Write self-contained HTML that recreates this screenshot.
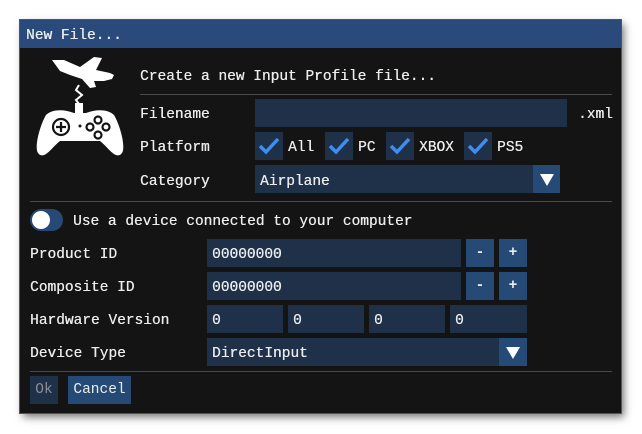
<!DOCTYPE html>
<html><head><style>
body{margin:0;width:642px;height:434px;background:#fff;position:relative;overflow:hidden;font-family:"Liberation Mono",monospace;font-size:14.5px;color:#ececec}
.dlg{position:absolute;left:20px;top:20px;width:601px;height:393px;background:#141414;box-shadow:3px 4px 8px rgba(0,0,0,.55);outline:1px solid #555}
.title{position:absolute;left:0;top:0;width:601px;height:28px;background:#294a7a;}
.t{position:absolute;white-space:pre;line-height:16px;margin-top:1px;text-shadow:0.3px 0 0 #ececec}
.in{position:absolute;background:#1f3049;height:28px}
.bt{position:absolute;background:#264a76;height:28px;text-align:center;line-height:29px;font-weight:bold}
.sep{position:absolute;height:1px;background:#4a4a4f}
.cb{position:absolute;width:28px;height:28px;background:#1f3049}
</style></head><body>
<div class="dlg"></div>
<div class="title" style="left:20px;top:20px"></div>
<div class="t" style="left:26px;top:27px">New File...</div>
<svg style="position:absolute;left:30px;top:55px" width="100" height="110" viewBox="0 0 100 110">
<g fill="#fff">
<path d="M22 5 L34 5 L50 12 L64 2 L72 3 L66 15 L80 18 L84 20 L82 24 L74 26 L64 26 L66 32 L60 33 L52 24 L40 20 L30 16 Z"/>
<path d="M8 98 C4 92 10 70 16 60 C22 54 34 54 44 58 L56 58 C66 54 78 54 84 60 C90 70 96 92 92 98 C86 106 78 92 70 86 L30 86 C22 92 14 106 8 98 Z"/>
<rect x="45" y="48" width="8" height="10"/>
</g>
<path d="M49 30 L46 35 L52 40 L46 45 L49 49" stroke="#fff" stroke-width="2" fill="none"/>
<g fill="none" stroke="#141414" stroke-width="2.2">
<circle cx="31" cy="72" r="8"/><path d="M31 67v10M26 72h10"/>
<circle cx="68" cy="65" r="3.5"/><circle cx="60" cy="72" r="3.5"/><circle cx="76" cy="72" r="3.5"/><circle cx="68" cy="80" r="3.5"/>
</g>
<circle cx="50" cy="71" r="1.5" fill="#141414"/>
</svg>
<div class="t" style="left:140px;top:68px">Create a new Input Profile file...</div>
<div class="sep" style="left:140px;top:94px;width:472px"></div>
<div class="t" style="left:140px;top:106px">Filename</div>
<div class="in" style="left:255px;top:99px;width:312px"></div>
<div class="t" style="left:578px;top:106px">.xml</div>
<div class="t" style="left:140px;top:139px">Platform</div>
<svg width="0" height="0" style="position:absolute"><defs><path id="ck" d="M5 14 L11 20 L23 7" stroke="#3d8ef0" stroke-width="3.5" fill="none"/></defs></svg>
<div class="cb" style="left:255px;top:132px"><svg width="28" height="28"><use href="#ck"/></svg></div><div class="t" style="left:288px;top:139px">All</div>
<div class="cb" style="left:325px;top:132px"><svg width="28" height="28"><use href="#ck"/></svg></div><div class="t" style="left:358px;top:139px">PC</div>
<div class="cb" style="left:386px;top:132px"><svg width="28" height="28"><use href="#ck"/></svg></div><div class="t" style="left:419px;top:139px">XBOX</div>
<div class="cb" style="left:464px;top:132px"><svg width="28" height="28"><use href="#ck"/></svg></div><div class="t" style="left:497px;top:139px">PS5</div>
<div class="t" style="left:140px;top:173px">Category</div>
<div class="in" style="left:255px;top:165px;width:305px"></div>
<div class="t" style="left:260px;top:173px">Airplane</div>
<div class="bt" style="left:533px;top:165px;width:27px"><svg width="27" height="28"><path d="M7 9h14l-7 12z" fill="#fff"/></svg></div>
<div class="sep" style="left:30px;top:201px;width:582px"></div>
<div style="position:absolute;left:30px;top:209px;width:33px;height:22px;border-radius:11px;background:#264a76"></div>
<div style="position:absolute;left:32px;top:211px;width:18px;height:18px;border-radius:9px;background:#fff"></div>
<div class="t" style="left:73px;top:213px">Use a device connected to your computer</div>
<div class="t" style="left:30px;top:246px">Product ID</div>
<div class="in" style="left:207px;top:239px;width:254px"></div>
<div class="t" style="left:212px;top:246px">00000000</div>
<div class="bt" style="left:466px;top:239px;width:28px">-</div>
<div class="bt" style="left:499px;top:239px;width:28px">+</div>
<div class="t" style="left:30px;top:279px">Composite ID</div>
<div class="in" style="left:207px;top:272px;width:254px"></div>
<div class="t" style="left:212px;top:279px">00000000</div>
<div class="bt" style="left:466px;top:272px;width:28px">-</div>
<div class="bt" style="left:499px;top:272px;width:28px">+</div>
<div class="t" style="left:30px;top:312px">Hardware Version</div>
<div class="in" style="left:207px;top:305px;width:76px"></div><div class="t" style="left:212px;top:312px">0</div>
<div class="in" style="left:288px;top:305px;width:76px"></div><div class="t" style="left:293px;top:312px">0</div>
<div class="in" style="left:369px;top:305px;width:76px"></div><div class="t" style="left:374px;top:312px">0</div>
<div class="in" style="left:450px;top:305px;width:77px"></div><div class="t" style="left:455px;top:312px">0</div>
<div class="t" style="left:30px;top:345px">Device Type</div>
<div class="in" style="left:207px;top:338px;width:320px"></div>
<div class="t" style="left:212px;top:345px">DirectInput</div>
<div class="bt" style="left:499px;top:338px;width:28px"><svg width="28" height="28"><path d="M7 9h14l-7 12z" fill="#fff"/></svg></div>
<div class="sep" style="left:30px;top:371px;width:582px"></div>
<div class="bt" style="left:30px;top:376px;width:28px;background:#1f3049;color:#8a8f98;font-weight:normal">Ok</div>
<div class="bt" style="left:68px;top:376px;width:63px;font-weight:normal">Cancel</div>
</body></html>
